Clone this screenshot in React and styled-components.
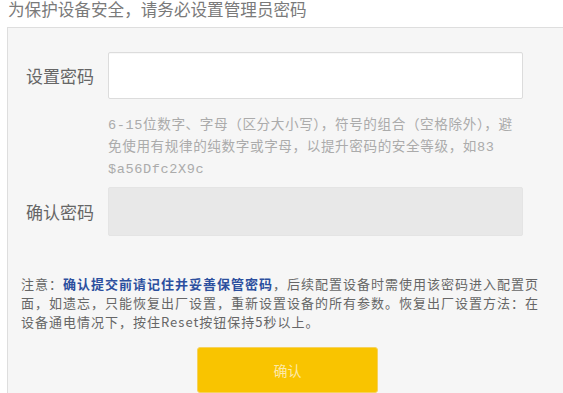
import React from "react";
import styled, { createGlobalStyle } from "styled-components";

const GlobalStyle = createGlobalStyle`
  html, body {
    margin: 0;
    padding: 0;
    background: #ffffff;
    overflow: hidden;
  }
  body {
    font-family: "Noto Sans CJK SC", "Liberation Sans", sans-serif;
  }
`;

const Page = styled.div`
  width: 563px;
  height: 393px;
  overflow: hidden;
`;

const Title = styled.div`
  margin: -1px 0 0 8px;
  height: 20px;
  line-height: 20px;
  font-size: 16.6px;
  color: #7a7a7a;
  white-space: nowrap;
`;

const Panel = styled.section`
  margin: 8px 0 0 7px;
  width: 559px;
  height: 380px;
  background: #f6f6f6;
  border-top: 1px solid #dedede;
  border-left: 1px solid #dedede;
  padding-top: 24px;
  box-sizing: content-box;
  display: flex;
  flex-direction: column;
`;

const Row = styled.div`
  display: flex;
  align-items: center;
  padding-left: 18px;
  margin-top: ${(p) => p.$top || 0}px;
`;

const Label = styled.div`
  width: 82px;
  font-size: 17px;
  color: #666666;
  white-space: nowrap;
`;

const Field = styled.div`
  width: 415px;
  height: ${(p) => p.$h}px;
  box-sizing: border-box;
  border: 1px solid ${(p) => (p.$disabled ? "#e4e4e4" : "#dcdcdc")};
  border-radius: 2px;
  background: ${(p) => (p.$disabled ? "#e8e8e8" : "#ffffff")};
  box-shadow: ${(p) =>
    p.$disabled ? "none" : "inset 0 1px 1px rgba(0,0,0,0.03)"};
`;

const Hint = styled.div`
  margin: 16px 0 0 100px;
  font-family: "Liberation Mono", "Noto Sans CJK SC", monospace;
  font-size: 13.6px;
  letter-spacing: 0.6px;
  line-height: 22px;
  color: #ababab;
`;

const Line = styled.span`
  display: block;
  white-space: nowrap;
`;

const Note = styled.div`
  margin: 38px 0 0 13px;
  font-size: 13px;
  letter-spacing: 1px;
  line-height: 19px;
  color: #666666;
`;

const Strong = styled.span`
  color: #2c4f9e;
  font-weight: 600;
`;

const Actions = styled.div`
  display: flex;
  justify-content: center;
  margin-top: 16px;
`;

const Button = styled.button`
  width: 181px;
  height: 46px;
  border: 1px solid #f6d25c;
  border-radius: 3px;
  background: #f9c400;
  color: #fde9a8;
  font-family: "Noto Sans CJK SC", sans-serif;
  font-size: 14px;
  cursor: pointer;
  padding: 0;
`;

export default function App() {
  return (
    <Page>
      <GlobalStyle />
      <Title>为保护设备安全，请务必设置管理员密码</Title>
      <Panel>
        <Row>
          <Label>设置密码</Label>
          <Field $h={47} />
        </Row>
        <Hint>
          <Line>6-15位数字、字母（区分大小写），符号的组合（空格除外），避</Line>
          <Line>免使用有规律的纯数字或字母，以提升密码的安全等级，如83</Line>
          <Line>$a56Dfc2X9c</Line>
        </Hint>
        <Row $top={6}>
          <Label>确认密码</Label>
          <Field $h={49} $disabled />
        </Row>
        <Note>
          <Line>
            注意：<Strong>确认提交前请记住并妥善保管密码</Strong>，后续配置设备时需使用该密码进入配置页
          </Line>
          <Line>面，如遗忘，只能恢复出厂设置，重新设置设备的所有参数。恢复出厂设置方法：在</Line>
          <Line>设备通电情况下，按住Reset按钮保持5秒以上。</Line>
        </Note>
        <Actions>
          <Button type="button">确认</Button>
        </Actions>
      </Panel>
    </Page>
  );
}
